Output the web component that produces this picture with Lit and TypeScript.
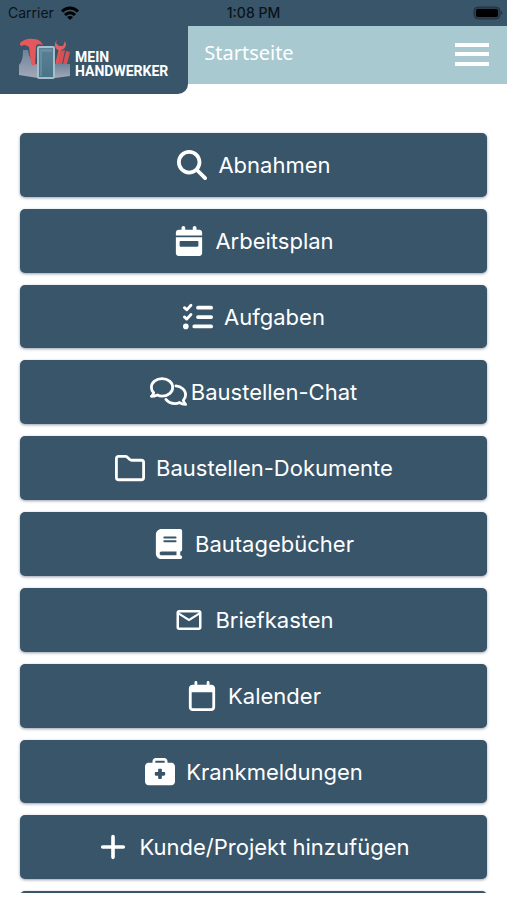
import { LitElement, html, svg, css, type SVGTemplateResult } from "lit";
import { customElement } from "lit/decorators.js";

interface Entry {
  label: string;
  icon: SVGTemplateResult;
}

const icon = (viewBox: string, body: SVGTemplateResult, kind = "glyph") => svg`
  <svg class="icon ${kind}" viewBox=${viewBox} aria-hidden="true">${body}</svg>`;

const entries: Entry[] = [
  {
    label: "Abnahmen",
    icon: icon("0 0 512 512", svg`<path fill="currentColor" d="M416 208c0 45.900-14.900 88.300-40 122.700L502.600 457.400c12.500 12.500 12.500 32.800 0 45.300s-32.800 12.500-45.300 0L330.700 376c-34.400 25.200-76.800 40-122.700 40C93.100 416 0 322.900 0 208S93.100 0 208 0S416 93.100 416 208zM208 352a144 144 0 1 0 0-288a144 144 0 1 0 0 288z"/>`),
  },
  {
    label: "Arbeitsplan",
    icon: icon("0 0 448 512", svg`<path fill="currentColor" fill-rule="evenodd" d="M128 0c18 0 32 14 32 32v32h128V32c0-18 14-32 32-32s32 14 32 32v32h48c26 0 48 22 48 48v48H0v-48c0-26 22-48 48-48h48V32c0-18 14-32 32-32zM0 192h448v272c0 26-22 48-48 48H48c-26 0-48-22-48-48V192zm80 64c-9 0-16 7-16 16v64c0 9 7 16 16 16h288c9 0 16-7 16-16v-64c0-9-7-16-16-16H80z"/>`),
  },
  {
    label: "Aufgaben",
    icon: icon("0 0 512 512", svg`
      <g fill="none" stroke="currentColor" stroke-linecap="round" stroke-linejoin="round">
        <path stroke-width="48" d="M24 96l40 38 72-78M24 254l40 38 72-78"/>
        <path stroke-width="64" d="M256 96h224M256 256h224M192 416h288"/>
      </g>
      <circle cx="48" cy="416" r="48" fill="currentColor"/>`),
  },
  {
    label: "Baustellen-Chat",
    icon: icon("0 0 640 512", svg`
      <g fill="none" stroke="currentColor" stroke-width="48" stroke-linecap="round" stroke-linejoin="round">
        <path d="M208 24C106 24 24 92 24 176c0 36 15 68 40 94-8 26-21 43-40 62 46 0 78-13 104-24 25 13 52 20 80 20 102 0 184-68 184-152S310 24 208 24z"/>
        <path d="M448 152c94 7 168 72 168 152 0 36-15 68-40 96 8 30 21 50 40 70-46 0-78-13-104-32-25 12-52 18-80 18-66 0-124-28-156-72"/>
      </g>`, "wide"),
  },
  {
    label: "Baustellen-Dokumente",
    icon: icon("0 0 512 512", svg`<path fill="none" stroke="currentColor" stroke-width="48" stroke-linejoin="round" d="M64 56h114c11 0 21 4 29 12l46 44c9 8 20 12 32 12h163c22 0 40 18 40 40v252c0 22-18 40-40 40H64c-22 0-40-18-40-40V96c0-22 18-40 40-40z"/>`),
  },
  {
    label: "Bautagebücher",
    icon: icon("0 0 448 512", svg`<path fill="currentColor" fill-rule="evenodd" d="M96 0C43 0 0 43 0 96v320c0 53 43 96 96 96h320c18 0 32-14 32-32s-14-32-32-32v-64c18 0 32-14 32-32V32c0-18-14-32-32-32H96zm0 384h256v64H96c-18 0-32-14-32-32s14-32 32-32zm48-256h192c9 0 16 7 16 16s-7 16-16 16H144c-9 0-16-7-16-16s7-16 16-16zm0 64h192c9 0 16 7 16 16s-7 16-16 16H144c-9 0-16-7-16-16s7-16 16-16z"/>`),
  },
  {
    label: "Briefkasten",
    icon: icon("0 0 24 24", svg`<path fill="currentColor" d="M22 6c0-1.100-.9-2-2-2H4c-1.100 0-2 .9-2 2v12c0 1.100.9 2 2 2h16c1.100 0 2-.9 2-2V6zm-2 0l-8 5-8-5h16zm0 12H4V8l8 5 8-5v10z"/>`),
  },
  {
    label: "Kalender",
    icon: icon("0 0 448 512", svg`<path fill="currentColor" fill-rule="evenodd" d="M120 0c14 0 24 10 24 24v40h160V24c0-14 10-24 24-24s24 10 24 24v40h32c35 0 64 29 64 64v320c0 35-29 64-64 64H64c-35 0-64-29-64-64V128c0-35 29-64 64-64h32V24c0-14 10-24 24-24zM48 192v256c0 9 7 16 16 16h320c9 0 16-7 16-16V192H48z"/>`),
  },
  {
    label: "Krankmeldungen",
    icon: icon("0 0 512 512", svg`<path fill="currentColor" fill-rule="evenodd" d="M184 16h144c31 0 56 25 56 56v24h64c35 0 64 29 64 64v256c0 35-29 64-64 64H64c-35 0-64-29-64-64V160c0-35 29-64 64-64h64V72c0-31 25-56 56-56zm0 48c-4 0-8 4-8 8v24h160V72c0-4-4-8-8-8H184zm56 136c-9 0-16 7-16 16v40h-40c-9 0-16 7-16 16v32c0 9 7 16 16 16h40v40c0 9 7 16 16 16h32c9 0 16-7 16-16v-40h40c9 0 16-7 16-16v-32c0-9-7-16-16-16h-40v-40c0-9-7-16-16-16h-32z"/>`),
  },
  {
    label: "Kunde/Projekt hinzufügen",
    icon: icon("0 0 512 512", svg`<path fill="none" stroke="currentColor" stroke-width="62" stroke-linecap="round" d="M256 80v352M80 256h352"/>`),
  },
];

@customElement("status-bar")
class StatusBar extends LitElement {
  static styles = css`
    :host {
      display: grid;
      grid-template-columns: 1fr auto 1fr;
      align-items: center;
      height: 26px;
      padding: 0 8px;
      box-sizing: border-box;
      background: #38556a;
      color: #0b1219;
      font: 14px/26px Inter, sans-serif;
    }
    .carrier {
      display: flex;
      align-items: center;
      gap: 7px;
    }
    .wifi {
      width: 18px;
      height: 14px;
    }
    .time {
      font-weight: 500;
    }
    .battery {
      justify-self: end;
      width: 30px;
      height: 14px;
      margin-right: -4px;
    }
  `;
  render() {
    return html`
      <span class="carrier">Carrier
        <svg class="wifi" viewBox="0 0 18 14" role="img" aria-label="WLAN">
          <g fill="none" stroke="#000" stroke-width="3">
            <path d="M1 5.500C5.500.9 12.500.9 17 5.500"/>
            <path d="M4 9c3-2.900 7-2.900 10 0"/>
          </g>
          <path d="M9 14l-3-3c1.700-1.500 4.300-1.500 6 0z"/>
        </svg>
      </span>
      <span class="time">1:08 PM</span>
      <svg class="battery" viewBox="0 0 30 14" role="img" aria-label="Akku">
        <rect x="1" y="1" width="26" height="12" rx="4" fill="#2a3f4f" stroke="#24333f"/>
        <rect x="3" y="3" width="22" height="8" rx="2"/>
        <path d="M28 5c2 1 2 3 0 4z" fill="#24333f"/>
      </svg>`;
  }
}

@customElement("brand-logo")
class BrandLogo extends LitElement {
  static styles = css`
    :host {
      display: flex;
      align-items: center;
      gap: 4px;
    }
    .picture {
      width: 52px;
      height: 42px;
      flex: none;
    }
    .name {
      display: grid;
      padding-top: 10px;
      color: #fff;
      font: 700 14px/14px Roboto, sans-serif;
    }
  `;
  render() {
    return html`
      <svg class="picture" viewBox="0 0 52 42" aria-hidden="true">
        <defs>
          <linearGradient id="steel" x1="0" y1="0" x2="0" y2="1">
            <stop offset="0" stop-color="#6f8298"/>
            <stop offset="1" stop-color="#a3a9bb"/>
          </linearGradient>
          <linearGradient id="glass" x1="0" y1="0" x2="0" y2="1">
            <stop offset="0" stop-color="#5b8094"/>
            <stop offset="1" stop-color="#4a7388"/>
          </linearGradient>
        </defs>
        <path fill="url(#steel)" d="M4 12h5c1 7 4 13 10 15v13L0 37V27c3-3 4-8 4-15z"/>
        <path fill="#e4585b" d="M1 5C4 2 9 0 14 1c5 0 8 2 10 6-4-1-6-1-7 1l-1 19c-2 1-4 0-4-2L10 9C7 7 5 6 3 8L1 7z"/>
        <path fill="none" stroke="#df5659" stroke-width="3" stroke-linecap="round" d="M41 12l-3 13"/>
        <path fill="#e06063" d="M38 2c-3 3-3 8 1 10 4 1 8-2 8-6l-1-3-2 5h-4l-3-3z"/>
        <path fill="#d94f53" d="M42 13l4-1-3 14h-4zM47 13l4 1-3 12h-4z"/>
        <path fill="url(#steel)" d="M36 26h15v12l-15 2z"/>
        <rect x="19" y="9" width="16" height="31" rx="1" fill="url(#glass)" stroke="#a5c0cd" stroke-width="2"/>
        <path fill="#7298aa" opacity="0.6" d="M21 11h12v3H21zM21 11h2v27h-2z"/>
      </svg>
      <span class="name"><span>MEIN</span><span>HANDWERKER</span></span>`;
  }
}

@customElement("app-root")
class AppRoot extends LitElement {
  static styles = css`
    :host {
      display: flex;
      flex-direction: column;
      height: 100vh;
      background: #fff;
      font-family: Inter, sans-serif;
    }
    .header {
      display: grid;
      grid-template-columns: auto 1fr;
      align-items: start;
      flex: none;
    }
    .brand {
      padding: 12px 20px 14px 19px;
      border-bottom-right-radius: 10px;
      background: #38556a;
      text-decoration: none;
    }
    .brand-cell {
      background: linear-gradient(#a8c9d0 58px, #fff 58px);
      display: flex;
    }
    .bar {
      display: flex;
      justify-content: space-between;
      align-items: center;
      height: 58px;
      padding: 0 18px 2px 16px;
      box-sizing: border-box;
      background: #a8c9d0;
    }
    .title {
      margin: 0;
      padding-bottom: 2px;
      color: #fff;
      font: 400 20px/28px "Noto Sans", sans-serif;
    }
    .menu {
      display: flex;
      flex-direction: column;
      justify-content: space-between;
      width: 34px;
      height: 23px;
      padding: 0;
      border: 0;
      background: none;
      cursor: pointer;
    }
    .line {
      height: 4px;
      background: #fff;
    }
    .entries {
      display: grid;
      grid-auto-rows: 8.4%;
      row-gap: 12px;
      flex: 1;
      min-height: 0;
      margin: 0 0 7px;
      padding: 39px 20px 0;
      overflow-y: auto;
      scrollbar-width: none;
    }
    .entry {
      display: flex;
      justify-content: center;
      align-items: center;
      gap: 10px;
      padding: 0;
      border: 0;
      border-radius: 5px;
      background: #38556a;
      box-shadow: 0 1px 3px rgba(30, 40, 70, 0.45);
      color: #fff;
      font: 400 22px/30px Inter, sans-serif;
      cursor: pointer;
    }
    .icon {
      flex: none;
      width: 32px;
      height: 30px;
    }
    .wide {
      width: 37px;
      margin-right: -6px;
    }
  `;
  render() {
    return html`
      <status-bar></status-bar>
      <header class="header">
        <div class="brand-cell">
          <a class="brand" href="#"><brand-logo></brand-logo></a>
        </div>
        <div class="bar">
          <h1 class="title">Startseite</h1>
          <button class="menu" type="button" aria-label="Menü">
            <span class="line"></span><span class="line"></span><span class="line"></span>
          </button>
        </div>
      </header>
      <main class="entries">
        ${entries.map(
          (entry) => html`<button class="entry" type="button">${entry.icon}<span>${entry.label}</span></button>`
        )}
        <button class="entry" type="button" aria-label="Weitere"></button>
      </main>`;
  }
}
